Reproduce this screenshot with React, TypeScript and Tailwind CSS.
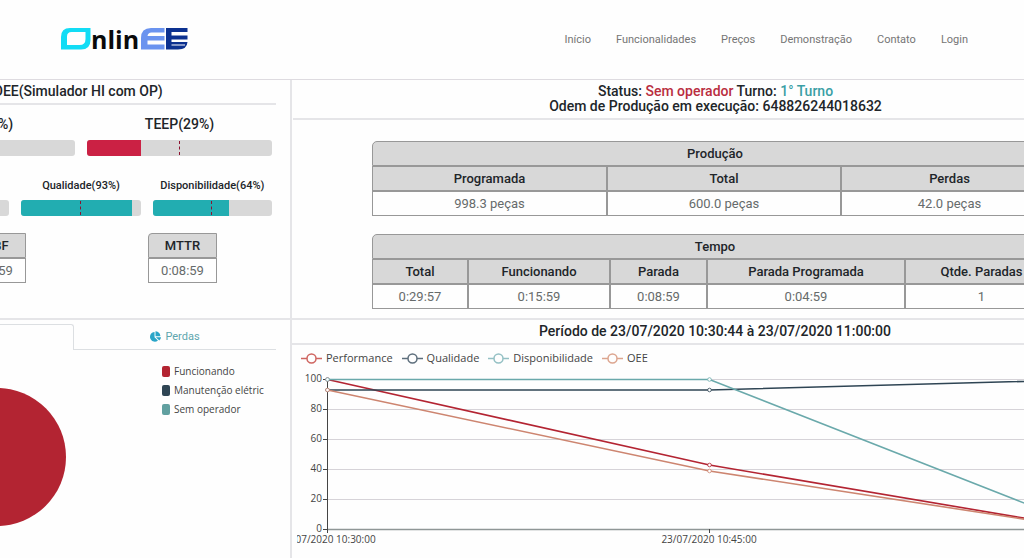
import React from 'react';
import { FaChartPie } from 'react-icons/fa';

const navItems = ['Início', 'Funcionalidades', 'Preços', 'Demonstração', 'Contato', 'Login'];

function Logo() {
  return (
    <svg viewBox="0 0 130 26" className="h-[26px] w-[130px] overflow-visible" role="img" aria-label="OnlinEE">
      <path
        fillRule="evenodd"
        fill="#12dcf5"
        d="M10 1H30.500V13Q30.500 22.500 21 22.500H1V10Q1 1 10 1ZM11.500 5Q7 5 7 9.500V18H19.500Q25.500 18 25.500 12V5Z"
      />
      <text x="31" y="22" fontSize="25" fontWeight="700" fill="#0a0a0a" fontFamily="'Open Sans', sans-serif">
        nlin
      </text>
      <path fill="#6a93ef" d="M91 1H104.500V5.500H91.500Q88 5.500 87.500 9H104.500V13.500H87.500V17.500H104.500V22.500H81V11Q81 1 91 1Z" />
      <path fill="#0c3190" d="M106 1H127.500V5H111.500V8.500H127.500V12.500H111.500V15H127.500Q127 22.500 118 22.500H106Z" />
      <path stroke="#fefefe" strokeWidth="1" d="M111.500 18H125" />
    </svg>
  );
}

type GaugeProps = { label: string; value: number; tone: 'red' | 'teal'; size: 'lg' | 'sm' };

function Gauge({ label, value, tone, size }: GaugeProps) {
  return (
    <div className="min-w-0 flex-1">
      <div
        className={
          size === 'lg'
            ? 'mb-2 text-center text-sm leading-4 font-medium whitespace-nowrap'
            : 'mb-1.5 text-center text-[11px] leading-4 font-medium whitespace-nowrap'
        }
      >
        {label}({value}%)
      </div>
      <div className="relative h-4 overflow-hidden rounded-[3px] bg-[#d8d8d8]">
        <div className={tone === 'red' ? 'h-full bg-[#cb2144]' : 'h-full bg-[#22adb1]'} style={{ width: `${value}%` }} />
        <div className="absolute inset-y-px left-1/2 -ml-px border-l border-dashed border-[#8c1230]" />
      </div>
    </div>
  );
}

const cell = 'h-[25px] border border-[#989898] p-0 text-center text-[13px] leading-4 whitespace-nowrap';
const head = `${cell} bg-[#d8d8d8] font-medium text-[#212529]`;
const body = `${cell} text-[#666b6b]`;

function MiniTable({ title, value }: { title: string; value: string }) {
  return (
    <table className="w-[69px] border-separate border-spacing-0">
      <thead>
        <tr>
          <th className={`${head} rounded-tl-[4px]`}>{title}</th>
        </tr>
      </thead>
      <tbody>
        <tr>
          <td className={body}>{value}</td>
        </tr>
      </tbody>
    </table>
  );
}

type Column = { name: string; value: string; width: string };

function DataTable({ title, columns }: { title: string; columns: Column[] }) {
  return (
    <table className="w-full table-fixed border-separate border-spacing-0">
      <colgroup>
        {columns.map((c) => (
          <col key={c.name} className={c.width} />
        ))}
      </colgroup>
      <thead>
        <tr>
          <th colSpan={columns.length} className={`${head} rounded-t-[5px]`}>
            {title}
          </th>
        </tr>
        <tr>
          {columns.map((c) => (
            <th key={c.name} className={head}>
              {c.name}
            </th>
          ))}
        </tr>
      </thead>
      <tbody>
        <tr>
          {columns.map((c) => (
            <td key={c.name} className={body}>
              {c.value}
            </td>
          ))}
        </tr>
      </tbody>
    </table>
  );
}

const production: Column[] = [
  { name: 'Programada', value: '998.3 peças', width: 'w-[235px]' },
  { name: 'Total', value: '600.0 peças', width: 'w-[234px]' },
  { name: 'Perdas', value: '42.0 peças', width: 'w-[217px]' },
];

const time: Column[] = [
  { name: 'Total', value: '0:29:57', width: 'w-[96px]' },
  { name: 'Funcionando', value: '0:15:59', width: 'w-[142px]' },
  { name: 'Parada', value: '0:08:59', width: 'w-[97px]' },
  { name: 'Parada Programada', value: '0:04:59', width: 'w-[198px]' },
  { name: 'Qtde. Paradas', value: '1', width: 'w-[153px]' },
];

const losses = [
  { name: 'Funcionando', color: 'bg-[#b32432]' },
  { name: 'Manutenção elétric', color: 'bg-[#2f4554]' },
  { name: 'Sem operador', color: 'bg-[#61a0a0]' },
];

const series = [
  { name: 'Performance', color: '#b32432', legend: '#cf6560', values: [100, 43, 0] },
  { name: 'Qualidade', color: '#2f4554', legend: '#5d6e7c', values: [93, 93, 100] },
  { name: 'Disponibilidade', color: '#6aa9ab', legend: '#94c0c4', values: [100, 100, 0] },
  { name: 'OEE', color: '#cd8570', legend: '#dca58f', values: [93, 39, 0] },
];

const px = (i: number) => 31 + i * 382;
const py = (v: number) => 161 - v * 1.5;

function LineChart() {
  return (
    <svg viewBox="0 0 836 190" className="block h-[190px] w-[836px]" fontFamily="'Open Sans', sans-serif" fontSize="10" fill="#444">
      {[0, 20, 40, 60, 80, 100].map((v) => (
        <g key={v}>
          <path d={`M31 ${py(v) + 0.5}H836`} stroke={v === 0 ? '#8f9696' : '#d6d3d8'} strokeWidth={v === 0 ? 1.5 : 1} />
          <path d={`M26 ${py(v) + 0.5}H31`} stroke="#444" />
          <text x="25" y={py(v) + 3} textAnchor="end">
            {v}
          </text>
        </g>
      ))}
      <path d="M30.500 11V165M412.500 161V165" stroke="#444" />
      <text x="31" y="175" textAnchor="middle">23/07/2020 10:30:00</text>
      <text x="412" y="175" textAnchor="middle">23/07/2020 10:45:00</text>
      {series.map((s) => (
        <g key={s.name} fill="none" stroke={s.color} transform="translate(-0.5 0.5)">
          <polyline strokeWidth="1.6" points={s.values.map((v, i) => `${px(i)},${py(v)}`).join(' ')} />
          {s.values.map((v, i) => (
            <circle key={i} cx={px(i)} cy={py(v)} r="1.800" fill="#fff" strokeWidth="0.8" />
          ))}
        </g>
      ))}
    </svg>
  );
}

export default function App() {
  return (
    <div className="min-h-screen overflow-hidden bg-[#fefefe] font-[Roboto,sans-serif] text-[#212529]">
      <header className="flex h-20 items-center justify-between border-b border-[#dedbe0] pr-14 pl-[60px]">
        <a href="#inicio">
          <Logo />
        </a>
        <nav className="flex gap-[25px] text-[11px] leading-4 text-[#757575]">
          {navItems.map((n) => (
            <a key={n} href="#secao">
              {n}
            </a>
          ))}
        </nav>
      </header>

      <main className="flex">
        <aside className="flex w-[292px] shrink-0 justify-end overflow-hidden border-r-2 border-[#e5e5e8]">
          <div className="w-[404px] shrink-0">
            <div className="mr-3.5 border-b-2 border-[#e5e5e8] pt-1 pr-1.5 pb-1">
              <h1 className="text-center text-sm leading-[15px] font-medium">OEE(Simulador HI com OP)</h1>
            </div>
            <div className="mr-[18px] ml-1 flex gap-3 pt-[11px]">
              <Gauge label="OEE" value={39} tone="red" size="lg" />
              <Gauge label="TEEP" value={29} tone="red" size="lg" />
            </div>
            <div className="mr-[18px] ml-1 flex gap-3 pt-[22px]">
              <Gauge label="Performance" value={65} tone="teal" size="sm" />
              <Gauge label="Qualidade" value={93} tone="teal" size="sm" />
              <Gauge label="Disponibilidade" value={64} tone="teal" size="sm" />
            </div>
            <div className="mt-[17px] flex justify-end gap-[122px] border-b-2 border-[#e5e5e8] pr-[73px] pb-[35px]">
              <MiniTable title="MTBF" value="0:15:59" />
              <MiniTable title="MTTR" value="0:08:59" />
            </div>
            <div className="mt-1 mr-3.5 flex text-[11px] leading-4" role="tablist">
              <button role="tab" aria-selected="true" className="h-[26px] w-[188px] rounded-t-[3px] border border-b-0 border-[#dcdfe2]">
                OEE
              </button>
              <button
                role="tab"
                aria-selected="false"
                className="flex h-[26px] flex-1 items-center justify-center gap-1 border-b border-[#dcdfe2] text-[#5fa6ae]"
              >
                <FaChartPie className="size-[11px] text-[#2aa5c8]" />
                Perdas
              </button>
            </div>
            <div className="flex justify-between pr-[26px]">
              <svg viewBox="0 0 140 140" className="mt-[37px] ml-[41px] size-[140px]" role="img" aria-label="Perdas">
                <circle cx="70" cy="70" r="69" fill="#b32432" />
              </svg>
              <ul className="mt-[13px] flex w-[102px] flex-col gap-[3px] font-['Open_Sans',sans-serif] text-[10px] leading-4 whitespace-nowrap text-[#444]">
                {losses.map((l) => (
                  <li key={l.name} className="flex items-center gap-1">
                    <span className={`h-[11px] w-2 shrink-0 rounded-[2px] ${l.color}`} />
                    {l.name}
                  </li>
                ))}
              </ul>
            </div>
          </div>
        </aside>

        <section className="min-w-0 flex-1 overflow-hidden">
          <div className="w-[846px]">
            <div className="ml-px border-b-2 border-[#e5e5e8] pt-1 pb-1 text-center text-sm leading-[15px] font-medium">
              <p>
                Status: <span className="text-[#b92d40]">Sem operador</span> Turno: <span className="text-[#3a9fa5]">1° Turno</span>
              </p>
              <p>Odem de Produção em execução: 648826244018632</p>
            </div>
            <div className="mx-auto flex w-[686px] flex-col gap-[18px] pt-[21px] pb-[9px]">
              <DataTable title="Produção" columns={production} />
              <DataTable title="Tempo" columns={time} />
            </div>
            <h2 className="border-y-2 border-[#e5e5e8] py-1 text-center text-sm leading-[15px] font-medium">
              Período de 23/07/2020 10:30:44 à 23/07/2020 11:00:00
            </h2>
            <ul className="flex gap-[9px] pt-1 pb-px pl-[9px] font-['Open_Sans',sans-serif] text-[11px] leading-[18px] text-[#444]">
              {series.map((s) => (
                <li key={s.name} className="flex items-center gap-1">
                  <svg viewBox="0 0 21 12" className="h-3 w-[21px]" fill="#fefefe" stroke={s.legend} strokeWidth="1.500">
                    <path d="M0 6.500H21" />
                    <circle cx="10.500" cy="6.500" r="4.500" />
                  </svg>
                  {s.name}
                </li>
              ))}
            </ul>
            <div className="pl-[5px]">
              <LineChart />
            </div>
          </div>
        </section>
      </main>
    </div>
  );
}
